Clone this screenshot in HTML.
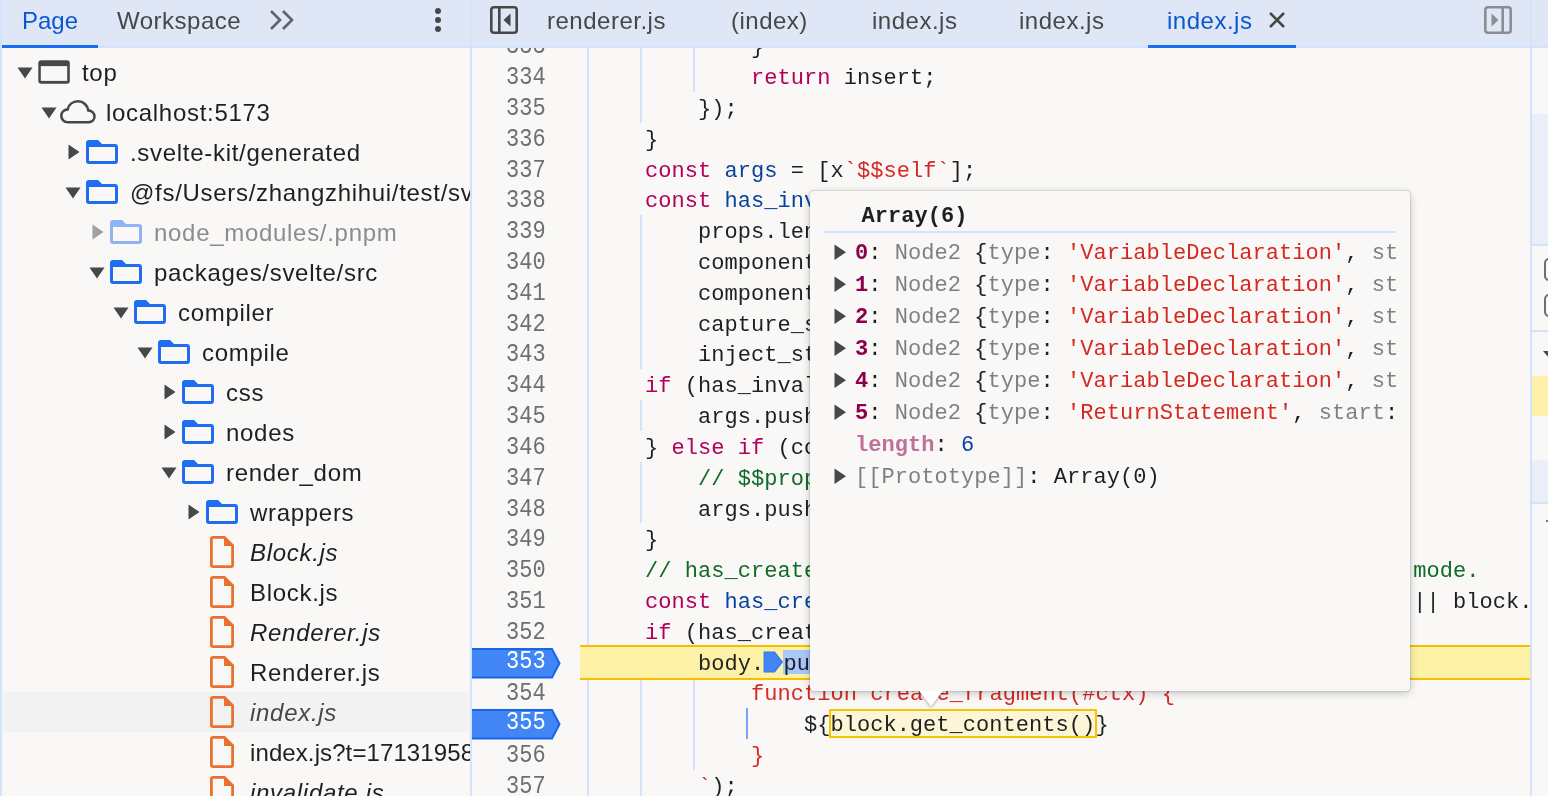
<!DOCTYPE html>
<html><head><meta charset="utf-8"><style>
*{margin:0;padding:0;box-sizing:border-box}
html,body{width:1548px;height:796px;overflow:hidden;background:#f9f8f6}
body{position:relative;font-family:"Liberation Sans",sans-serif;}
.a{position:absolute}
.sans{font-family:"Liberation Sans",sans-serif;font-size:24px;letter-spacing:0.5px;white-space:pre;line-height:40px;height:40px}
.mono{font-family:"Liberation Mono",monospace;font-size:22px;white-space:pre;letter-spacing:0.045px}
.kw{color:#b0005c}.df{color:#0842a0}.st{color:#d52a22}.cm{color:#0f6b27}.tx{color:#1f1f1f}
</style></head><body><div class="a" style="left:0;top:0;width:1548px;height:796px;will-change:transform;overflow:hidden">

<div class="a" style="left:0;top:0;width:2px;height:796px;background:#d3e3fd"></div>
<div class="a" style="left:2px;top:0;width:468px;height:46px;background:#dfe7f6"></div>
<div class="a" style="left:0;top:46px;width:1548px;height:2px;background:#d3e3fd"></div>
<div class="a sans" style="left:22px;top:-2.5px;color:#0b57d0;line-height:46px;height:46px;letter-spacing:0">Page</div>
<div class="a" style="left:2px;top:45px;width:96px;height:3px;background:#1a6ef5"></div>
<div class="a sans" style="left:117px;top:-2.5px;color:#474747;line-height:46px;height:46px">Workspace</div>
<svg class="a" style="left:268px;top:8px" width="28" height="24" viewBox="0 0 28 24"><path d="M3 3 L12 12 L3 21 M15 3 L24 12 L15 21" fill="none" stroke="#5f6368" stroke-width="2.6"/></svg>
<svg class="a" style="left:430px;top:4px" width="16" height="32"><circle cx="8" cy="7" r="3" fill="#474747"/><circle cx="8" cy="16" r="3" fill="#474747"/><circle cx="8" cy="25" r="3" fill="#474747"/></svg>
<div class="a" style="left:470px;top:0;width:2px;height:796px;background:#d3e3fd"></div>
<div class="a" style="left:2px;top:48px;width:468px;height:748px;overflow:hidden">
<svg class="a" style="left:15px;top:19px" width="16" height="12"><path d="M0.5 0.5 L15.5 0.5 L8 11.5 Z" fill="#474747"/></svg>
<svg class="a" style="left:35px;top:11px" width="34" height="26" viewBox="0 0 34 26"><rect x="1.3" y="1.2" width="31.5" height="23.5" rx="3" fill="#474747"/><rect x="3.8" y="7.1" width="26.4" height="14.8" fill="#f9f8f6"/></svg>
<div class="a sans" style="left:80px;top:5px;color:#1f1f1f;font-style:normal;letter-spacing:0.7px">top</div>
<svg class="a" style="left:39px;top:59px" width="16" height="12"><path d="M0.5 0.5 L15.5 0.5 L8 11.5 Z" fill="#474747"/></svg>
<svg class="a" style="left:57px;top:51px" width="38" height="26" viewBox="0 0 38 26"><path d="M9 23.2 C5 23.2 2.3 20.3 2.3 16.8 C2.3 13.3 5 10.6 8.6 10.4 C9.8 5.6 14 2.3 19 2.3 C24.5 2.3 28.6 6.3 29.3 11.4 C33 11.8 35.5 14.4 35.5 17.6 C35.5 20.7 33 23.2 29.5 23.2 Z" fill="none" stroke="#474747" stroke-width="2.6"/></svg>
<div class="a sans" style="left:104px;top:45px;color:#1f1f1f;font-style:normal;letter-spacing:0.7px">localhost:5173</div>
<svg class="a" style="left:65.5px;top:96px" width="12" height="16"><path d="M0.5 0.5 L11.5 8 L0.5 15.5 Z" fill="#474747"/></svg>
<svg class="a" style="left:83px;top:91px" width="34" height="26" viewBox="0 0 34 26"><path d="M1 4 Q1 1 4 1 L13 1 L17 5 L30 5 Q33 5 33 8 L33 22 Q33 25 30 25 L4 25 Q1 25 1 22 Z" fill="#1f6ef2"/><rect x="4" y="8" width="26" height="14" fill="#f9f8f6"/></svg>
<div class="a sans" style="left:128px;top:85px;color:#1f1f1f;font-style:normal;letter-spacing:0.7px">.svelte-kit/generated</div>
<svg class="a" style="left:63px;top:139px" width="16" height="12"><path d="M0.5 0.5 L15.5 0.5 L8 11.5 Z" fill="#474747"/></svg>
<svg class="a" style="left:83px;top:131px" width="34" height="26" viewBox="0 0 34 26"><path d="M1 4 Q1 1 4 1 L13 1 L17 5 L30 5 Q33 5 33 8 L33 22 Q33 25 30 25 L4 25 Q1 25 1 22 Z" fill="#1f6ef2"/><rect x="4" y="8" width="26" height="14" fill="#f9f8f6"/></svg>
<div class="a sans" style="left:128px;top:125px;color:#1f1f1f;font-style:normal;letter-spacing:0.7px">@fs/Users/zhangzhihui/test/svelte</div>
<svg class="a" style="left:89.5px;top:176px" width="12" height="16"><path d="M0.5 0.5 L11.5 8 L0.5 15.5 Z" fill="#a0a0a0"/></svg>
<svg class="a" style="left:107px;top:171px" width="34" height="26" viewBox="0 0 34 26"><path d="M1 4 Q1 1 4 1 L13 1 L17 5 L30 5 Q33 5 33 8 L33 22 Q33 25 30 25 L4 25 Q1 25 1 22 Z" fill="#8fb3f5"/><rect x="4" y="8" width="26" height="14" fill="#f9f8f6"/></svg>
<div class="a sans" style="left:152px;top:165px;color:#8c8c8c;font-style:normal;letter-spacing:0.7px">node_modules/.pnpm</div>
<svg class="a" style="left:87px;top:219px" width="16" height="12"><path d="M0.5 0.5 L15.5 0.5 L8 11.5 Z" fill="#474747"/></svg>
<svg class="a" style="left:107px;top:211px" width="34" height="26" viewBox="0 0 34 26"><path d="M1 4 Q1 1 4 1 L13 1 L17 5 L30 5 Q33 5 33 8 L33 22 Q33 25 30 25 L4 25 Q1 25 1 22 Z" fill="#1f6ef2"/><rect x="4" y="8" width="26" height="14" fill="#f9f8f6"/></svg>
<div class="a sans" style="left:152px;top:205px;color:#1f1f1f;font-style:normal;letter-spacing:0.7px">packages/svelte/src</div>
<svg class="a" style="left:111px;top:259px" width="16" height="12"><path d="M0.5 0.5 L15.5 0.5 L8 11.5 Z" fill="#474747"/></svg>
<svg class="a" style="left:131px;top:251px" width="34" height="26" viewBox="0 0 34 26"><path d="M1 4 Q1 1 4 1 L13 1 L17 5 L30 5 Q33 5 33 8 L33 22 Q33 25 30 25 L4 25 Q1 25 1 22 Z" fill="#1f6ef2"/><rect x="4" y="8" width="26" height="14" fill="#f9f8f6"/></svg>
<div class="a sans" style="left:176px;top:245px;color:#1f1f1f;font-style:normal;letter-spacing:0.7px">compiler</div>
<svg class="a" style="left:135px;top:299px" width="16" height="12"><path d="M0.5 0.5 L15.5 0.5 L8 11.5 Z" fill="#474747"/></svg>
<svg class="a" style="left:155px;top:291px" width="34" height="26" viewBox="0 0 34 26"><path d="M1 4 Q1 1 4 1 L13 1 L17 5 L30 5 Q33 5 33 8 L33 22 Q33 25 30 25 L4 25 Q1 25 1 22 Z" fill="#1f6ef2"/><rect x="4" y="8" width="26" height="14" fill="#f9f8f6"/></svg>
<div class="a sans" style="left:200px;top:285px;color:#1f1f1f;font-style:normal;letter-spacing:0.7px">compile</div>
<svg class="a" style="left:161.5px;top:336px" width="12" height="16"><path d="M0.5 0.5 L11.5 8 L0.5 15.5 Z" fill="#474747"/></svg>
<svg class="a" style="left:179px;top:331px" width="34" height="26" viewBox="0 0 34 26"><path d="M1 4 Q1 1 4 1 L13 1 L17 5 L30 5 Q33 5 33 8 L33 22 Q33 25 30 25 L4 25 Q1 25 1 22 Z" fill="#1f6ef2"/><rect x="4" y="8" width="26" height="14" fill="#f9f8f6"/></svg>
<div class="a sans" style="left:224px;top:325px;color:#1f1f1f;font-style:normal;letter-spacing:0.7px">css</div>
<svg class="a" style="left:161.5px;top:376px" width="12" height="16"><path d="M0.5 0.5 L11.5 8 L0.5 15.5 Z" fill="#474747"/></svg>
<svg class="a" style="left:179px;top:371px" width="34" height="26" viewBox="0 0 34 26"><path d="M1 4 Q1 1 4 1 L13 1 L17 5 L30 5 Q33 5 33 8 L33 22 Q33 25 30 25 L4 25 Q1 25 1 22 Z" fill="#1f6ef2"/><rect x="4" y="8" width="26" height="14" fill="#f9f8f6"/></svg>
<div class="a sans" style="left:224px;top:365px;color:#1f1f1f;font-style:normal;letter-spacing:0.7px">nodes</div>
<svg class="a" style="left:159px;top:419px" width="16" height="12"><path d="M0.5 0.5 L15.5 0.5 L8 11.5 Z" fill="#474747"/></svg>
<svg class="a" style="left:179px;top:411px" width="34" height="26" viewBox="0 0 34 26"><path d="M1 4 Q1 1 4 1 L13 1 L17 5 L30 5 Q33 5 33 8 L33 22 Q33 25 30 25 L4 25 Q1 25 1 22 Z" fill="#1f6ef2"/><rect x="4" y="8" width="26" height="14" fill="#f9f8f6"/></svg>
<div class="a sans" style="left:224px;top:405px;color:#1f1f1f;font-style:normal;letter-spacing:0.7px">render_dom</div>
<svg class="a" style="left:185.5px;top:456px" width="12" height="16"><path d="M0.5 0.5 L11.5 8 L0.5 15.5 Z" fill="#474747"/></svg>
<svg class="a" style="left:203px;top:451px" width="34" height="26" viewBox="0 0 34 26"><path d="M1 4 Q1 1 4 1 L13 1 L17 5 L30 5 Q33 5 33 8 L33 22 Q33 25 30 25 L4 25 Q1 25 1 22 Z" fill="#1f6ef2"/><rect x="4" y="8" width="26" height="14" fill="#f9f8f6"/></svg>
<div class="a sans" style="left:248px;top:445px;color:#1f1f1f;font-style:normal;letter-spacing:0.7px">wrappers</div>
<svg class="a" style="left:207px;top:487px" width="26" height="34" viewBox="0 0 26 34"><path d="M1 4 Q1 1 4 1 L16 1 L25 10 L25 30 Q25 33 22 33 L4 33 Q1 33 1 30 Z" fill="#e8712c"/><path d="M3.8 3.8 L15 3.8 L15 11 L22.2 11 L22.2 30.2 L3.8 30.2 Z" fill="#f9f8f6"/></svg>
<div class="a sans" style="left:248px;top:485px;color:#1f1f1f;font-style:italic;letter-spacing:0.7px">Block.js</div>
<svg class="a" style="left:207px;top:527px" width="26" height="34" viewBox="0 0 26 34"><path d="M1 4 Q1 1 4 1 L16 1 L25 10 L25 30 Q25 33 22 33 L4 33 Q1 33 1 30 Z" fill="#e8712c"/><path d="M3.8 3.8 L15 3.8 L15 11 L22.2 11 L22.2 30.2 L3.8 30.2 Z" fill="#f9f8f6"/></svg>
<div class="a sans" style="left:248px;top:525px;color:#1f1f1f;font-style:normal;letter-spacing:0.7px">Block.js</div>
<svg class="a" style="left:207px;top:567px" width="26" height="34" viewBox="0 0 26 34"><path d="M1 4 Q1 1 4 1 L16 1 L25 10 L25 30 Q25 33 22 33 L4 33 Q1 33 1 30 Z" fill="#e8712c"/><path d="M3.8 3.8 L15 3.8 L15 11 L22.2 11 L22.2 30.2 L3.8 30.2 Z" fill="#f9f8f6"/></svg>
<div class="a sans" style="left:248px;top:565px;color:#1f1f1f;font-style:italic;letter-spacing:0.7px">Renderer.js</div>
<svg class="a" style="left:207px;top:607px" width="26" height="34" viewBox="0 0 26 34"><path d="M1 4 Q1 1 4 1 L16 1 L25 10 L25 30 Q25 33 22 33 L4 33 Q1 33 1 30 Z" fill="#e8712c"/><path d="M3.8 3.8 L15 3.8 L15 11 L22.2 11 L22.2 30.2 L3.8 30.2 Z" fill="#f9f8f6"/></svg>
<div class="a sans" style="left:248px;top:605px;color:#1f1f1f;font-style:normal;letter-spacing:0.7px">Renderer.js</div>
<div class="a" style="left:0;top:644px;width:468px;height:40px;background:#f2f2f2"></div>
<svg class="a" style="left:207px;top:647px" width="26" height="34" viewBox="0 0 26 34"><path d="M1 4 Q1 1 4 1 L16 1 L25 10 L25 30 Q25 33 22 33 L4 33 Q1 33 1 30 Z" fill="#e8712c"/><path d="M3.8 3.8 L15 3.8 L15 11 L22.2 11 L22.2 30.2 L3.8 30.2 Z" fill="#f2f2f2"/></svg>
<div class="a sans" style="left:248px;top:645px;color:#474747;font-style:italic;letter-spacing:0.7px">index.js</div>
<svg class="a" style="left:207px;top:687px" width="26" height="34" viewBox="0 0 26 34"><path d="M1 4 Q1 1 4 1 L16 1 L25 10 L25 30 Q25 33 22 33 L4 33 Q1 33 1 30 Z" fill="#e8712c"/><path d="M3.8 3.8 L15 3.8 L15 11 L22.2 11 L22.2 30.2 L3.8 30.2 Z" fill="#f9f8f6"/></svg>
<div class="a sans" style="left:248px;top:685px;color:#1f1f1f;font-style:normal;letter-spacing:0.1px">index.js?t=1713195864</div>
<svg class="a" style="left:207px;top:727px" width="26" height="34" viewBox="0 0 26 34"><path d="M1 4 Q1 1 4 1 L16 1 L25 10 L25 30 Q25 33 22 33 L4 33 Q1 33 1 30 Z" fill="#e8712c"/><path d="M3.8 3.8 L15 3.8 L15 11 L22.2 11 L22.2 30.2 L3.8 30.2 Z" fill="#f9f8f6"/></svg>
<div class="a sans" style="left:248px;top:725px;color:#1f1f1f;font-style:italic;letter-spacing:0.7px">invalidate.js</div>
</div>
<div class="a" style="left:472px;top:0;width:1058px;height:46px;background:#dfe7f6"></div>
<svg class="a" style="left:489px;top:5px" width="30" height="30" viewBox="0 0 30 30"><rect x="2.3" y="2.3" width="25.4" height="25.4" rx="2.5" fill="none" stroke="#474747" stroke-width="2.6"/><rect x="9" y="2" width="2.6" height="26" fill="#474747"/><path d="M21.5 8.5 L14.5 15 L21.5 21.5 Z" fill="#474747"/></svg>
<div class="a sans" style="left:547px;top:-2.5px;color:#474747;line-height:46px;height:46px">renderer.js</div>
<div class="a sans" style="left:731px;top:-2.5px;color:#474747;line-height:46px;height:46px">(index)</div>
<div class="a sans" style="left:872px;top:-2.5px;color:#474747;line-height:46px;height:46px">index.js</div>
<div class="a sans" style="left:1019px;top:-2.5px;color:#474747;line-height:46px;height:46px">index.js</div>
<div class="a sans" style="left:1167px;top:-2.5px;color:#0b57d0;line-height:46px;height:46px">index.js</div>
<svg class="a" style="left:1268px;top:11px" width="18" height="18"><path d="M2 2 L16 16 M16 2 L2 16" stroke="#474747" stroke-width="2.6"/></svg>
<div class="a" style="left:1148px;top:45px;width:148px;height:3px;background:#1a6ef5"></div>
<svg class="a" style="left:1483px;top:5px" width="30" height="30" viewBox="0 0 30 30"><rect x="2.3" y="2.3" width="25.4" height="25.4" rx="2.5" fill="none" stroke="#8a8d91" stroke-width="2.6"/><rect x="18.4" y="2" width="2.6" height="26" fill="#8a8d91"/><path d="M8.5 8.5 L15.5 15 L8.5 21.5 Z" fill="#8a8d91"/></svg>
<div class="a" style="left:472px;top:48px;width:1058px;height:748px;overflow:hidden">
<div class="a" style="left:115px;top:0;width:2px;height:748px;background:#d3e3fd"></div>
<div class="a" style="left:168.0px;top:-17.8px;width:2px;height:92.5px;background:#d3e3fd"></div>
<div class="a" style="left:220.8px;top:-17.8px;width:2px;height:61.6px;background:#d3e3fd"></div>
<div class="a" style="left:168.0px;top:167.1px;width:2px;height:154.1px;background:#d3e3fd"></div>
<div class="a" style="left:168.0px;top:352.0px;width:2px;height:30.8px;background:#d3e3fd"></div>
<div class="a" style="left:168.0px;top:413.7px;width:2px;height:61.6px;background:#d3e3fd"></div>
<div class="a" style="left:168.0px;top:598.6px;width:2px;height:154.1px;background:#d3e3fd"></div>
<div class="a" style="left:220.8px;top:629.4px;width:2px;height:92.5px;background:#d3e3fd"></div>
<div class="a" style="left:273.6px;top:660.2px;width:2px;height:30.8px;background:#7aa5f2"></div>
<div class="a" style="left:108px;top:597.1px;width:950px;height:34.8px;background:#fdf1a7;border-top:2px solid #f5c000;border-bottom:2px solid #f5c000"></div>
<div class="a mono" style="left:34px;top:-17.8px;line-height:30.82px;color:#6f6f6f;padding-top:2px;transform:scaleY(1.13);transform-origin:0 14.8px">333</div>
<div class="a mono" style="left:120px;top:-17.8px;line-height:30.82px;padding-top:3px"><span class="tx">            }</span></div>
<div class="a mono" style="left:34px;top:13.0px;line-height:30.82px;color:#6f6f6f;padding-top:2px;transform:scaleY(1.13);transform-origin:0 14.8px">334</div>
<div class="a mono" style="left:120px;top:13.0px;line-height:30.82px;padding-top:3px"><span class="tx">            </span><span class="kw">return</span><span class="tx"> insert;</span></div>
<div class="a mono" style="left:34px;top:43.8px;line-height:30.82px;color:#6f6f6f;padding-top:2px;transform:scaleY(1.13);transform-origin:0 14.8px">335</div>
<div class="a mono" style="left:120px;top:43.8px;line-height:30.82px;padding-top:3px"><span class="tx">        });</span></div>
<div class="a mono" style="left:34px;top:74.6px;line-height:30.82px;color:#6f6f6f;padding-top:2px;transform:scaleY(1.13);transform-origin:0 14.8px">336</div>
<div class="a mono" style="left:120px;top:74.6px;line-height:30.82px;padding-top:3px"><span class="tx">    }</span></div>
<div class="a mono" style="left:34px;top:105.5px;line-height:30.82px;color:#6f6f6f;padding-top:2px;transform:scaleY(1.13);transform-origin:0 14.8px">337</div>
<div class="a mono" style="left:120px;top:105.5px;line-height:30.82px;padding-top:3px"><span class="tx">    </span><span class="kw">const</span><span class="tx"> </span><span class="df">args</span><span class="tx"> = [x</span><span class="st">`$$self`</span><span class="tx">];</span></div>
<div class="a mono" style="left:34px;top:136.3px;line-height:30.82px;color:#6f6f6f;padding-top:2px;transform:scaleY(1.13);transform-origin:0 14.8px">338</div>
<div class="a mono" style="left:120px;top:136.3px;line-height:30.82px;padding-top:3px"><span class="tx">    </span><span class="kw">const</span><span class="tx"> </span><span class="df">has_inv</span></div>
<div class="a mono" style="left:34px;top:167.1px;line-height:30.82px;color:#6f6f6f;padding-top:2px;transform:scaleY(1.13);transform-origin:0 14.8px">339</div>
<div class="a mono" style="left:120px;top:167.1px;line-height:30.82px;padding-top:3px"><span class="tx">        props.length</span></div>
<div class="a mono" style="left:34px;top:197.9px;line-height:30.82px;color:#6f6f6f;padding-top:2px;transform:scaleY(1.13);transform-origin:0 14.8px">340</div>
<div class="a mono" style="left:120px;top:197.9px;line-height:30.82px;padding-top:3px"><span class="tx">        component.</span></div>
<div class="a mono" style="left:34px;top:228.7px;line-height:30.82px;color:#6f6f6f;padding-top:2px;transform:scaleY(1.13);transform-origin:0 14.8px">341</div>
<div class="a mono" style="left:120px;top:228.7px;line-height:30.82px;padding-top:3px"><span class="tx">        component.</span></div>
<div class="a mono" style="left:34px;top:259.6px;line-height:30.82px;color:#6f6f6f;padding-top:2px;transform:scaleY(1.13);transform-origin:0 14.8px">342</div>
<div class="a mono" style="left:120px;top:259.6px;line-height:30.82px;padding-top:3px"><span class="tx">        capture_st</span></div>
<div class="a mono" style="left:34px;top:290.4px;line-height:30.82px;color:#6f6f6f;padding-top:2px;transform:scaleY(1.13);transform-origin:0 14.8px">343</div>
<div class="a mono" style="left:120px;top:290.4px;line-height:30.82px;padding-top:3px"><span class="tx">        inject_sta</span></div>
<div class="a mono" style="left:34px;top:321.2px;line-height:30.82px;color:#6f6f6f;padding-top:2px;transform:scaleY(1.13);transform-origin:0 14.8px">344</div>
<div class="a mono" style="left:120px;top:321.2px;line-height:30.82px;padding-top:3px"><span class="tx">    </span><span class="kw">if</span><span class="tx"> (has_invalid</span></div>
<div class="a mono" style="left:34px;top:352.0px;line-height:30.82px;color:#6f6f6f;padding-top:2px;transform:scaleY(1.13);transform-origin:0 14.8px">345</div>
<div class="a mono" style="left:120px;top:352.0px;line-height:30.82px;padding-top:3px"><span class="tx">        args.push(</span></div>
<div class="a mono" style="left:34px;top:382.8px;line-height:30.82px;color:#6f6f6f;padding-top:2px;transform:scaleY(1.13);transform-origin:0 14.8px">346</div>
<div class="a mono" style="left:120px;top:382.8px;line-height:30.82px;padding-top:3px"><span class="tx">    } </span><span class="kw">else if</span><span class="tx"> (comp</span></div>
<div class="a mono" style="left:34px;top:413.7px;line-height:30.82px;color:#6f6f6f;padding-top:2px;transform:scaleY(1.13);transform-origin:0 14.8px">347</div>
<div class="a mono" style="left:120px;top:413.7px;line-height:30.82px;padding-top:3px"><span class="tx">        </span><span class="cm">// $$props</span></div>
<div class="a mono" style="left:34px;top:444.5px;line-height:30.82px;color:#6f6f6f;padding-top:2px;transform:scaleY(1.13);transform-origin:0 14.8px">348</div>
<div class="a mono" style="left:120px;top:444.5px;line-height:30.82px;padding-top:3px"><span class="tx">        args.push(</span></div>
<div class="a mono" style="left:34px;top:475.3px;line-height:30.82px;color:#6f6f6f;padding-top:2px;transform:scaleY(1.13);transform-origin:0 14.8px">349</div>
<div class="a mono" style="left:120px;top:475.3px;line-height:30.82px;padding-top:3px"><span class="tx">    }</span></div>
<div class="a mono" style="left:34px;top:506.1px;line-height:30.82px;color:#6f6f6f;padding-top:2px;transform:scaleY(1.13);transform-origin:0 14.8px">350</div>
<div class="a mono" style="left:120px;top:506.1px;line-height:30.82px;padding-top:3px"><span class="cm">    // has_create_fragment </span></div>
<div class="a mono" style="left:34px;top:536.9px;line-height:30.82px;color:#6f6f6f;padding-top:2px;transform:scaleY(1.13);transform-origin:0 14.8px">351</div>
<div class="a mono" style="left:120px;top:536.9px;line-height:30.82px;padding-top:3px"><span class="tx">    </span><span class="kw">const</span><span class="tx"> </span><span class="df">has_create</span></div>
<div class="a mono" style="left:34px;top:567.8px;line-height:30.82px;color:#6f6f6f;padding-top:2px;transform:scaleY(1.13);transform-origin:0 14.8px">352</div>
<div class="a mono" style="left:120px;top:567.8px;line-height:30.82px;padding-top:3px"><span class="tx">    </span><span class="kw">if</span><span class="tx"> (has_create</span></div>
<svg class="a" style="left:0px;top:599.6px" width="90" height="31" viewBox="0 0 90 31"><path d="M-2 1 L80 1 L87.5 15.2 L80 29.4 L-2 29.4 Z" fill="#4285f4" stroke="#1567e8" stroke-width="2"/></svg>
<div class="a mono" style="left:34px;top:596.6px;line-height:30.82px;color:#ffffff;padding-top:2px;transform:scaleY(1.13);transform-origin:0 14.8px">353</div>
<div class="a mono" style="left:120px;top:598.6px;line-height:30.82px;padding-top:3px"><span class="tx">        body.</span></div>
<div class="a mono" style="left:34px;top:629.4px;line-height:30.82px;color:#6f6f6f;padding-top:2px;transform:scaleY(1.13);transform-origin:0 14.8px">354</div>
<div class="a mono" style="left:120px;top:629.4px;line-height:30.82px;padding-top:3px"><span class="tx">            </span><span class="st">function create_fragment(#ctx) {</span></div>
<svg class="a" style="left:0px;top:661.2px" width="90" height="31" viewBox="0 0 90 31"><path d="M-2 1 L80 1 L87.5 15.2 L80 29.4 L-2 29.4 Z" fill="#4285f4" stroke="#1567e8" stroke-width="2"/></svg>
<div class="a mono" style="left:34px;top:658.2px;line-height:30.82px;color:#ffffff;padding-top:2px;transform:scaleY(1.13);transform-origin:0 14.8px">355</div>
<div class="a mono" style="left:120px;top:660.2px;line-height:30.82px;padding-top:3px"><span class="tx">                ${block.get_contents()}</span></div>
<div class="a mono" style="left:34px;top:691.0px;line-height:30.82px;color:#6f6f6f;padding-top:2px;transform:scaleY(1.13);transform-origin:0 14.8px">356</div>
<div class="a mono" style="left:120px;top:691.0px;line-height:30.82px;padding-top:3px"><span class="tx">            </span><span class="st">}</span></div>
<div class="a mono" style="left:34px;top:721.9px;line-height:30.82px;color:#6f6f6f;padding-top:2px;transform:scaleY(1.13);transform-origin:0 14.8px">357</div>
<div class="a mono" style="left:120px;top:721.9px;line-height:30.82px;padding-top:3px"><span class="tx">        </span><span class="st">`</span><span class="tx">);</span></div>
<div class="a mono cm" style="left:941.2px;top:506.1px;line-height:30.82px;padding-top:3px">mode.</div>
<div class="a mono tx" style="left:941.2px;top:536.9px;line-height:30.82px;padding-top:3px">|| block.</div>
<div class="a" style="left:311.0px;top:602.0px;width:120px;height:24px;background:#a8c7fa"></div>
<div class="a mono tx" style="left:311.5px;top:598.6px;line-height:30.82px;padding-top:3px">push(</div>
<svg class="a" style="left:291.3px;top:603.2px" width="22" height="23" viewBox="0 0 22 23"><path d="M1.2 1.2 L11.5 1.2 L19.3 11 L11.5 20.8 L1.2 20.8 Z" fill="#4285f4" stroke="#2a74f0" stroke-width="1.2"/></svg>
<div class="a" style="left:356.5px;top:661.0px;width:268.5px;height:29px;background:#fcf6d6;border:2px solid #f9c300"></div>
<div class="a mono tx" style="left:358.4px;top:660.2px;line-height:30.82px;padding-top:3px">block.get_contents()</div>
</div>
<div class="a" style="left:810px;top:190.5px;width:600px;height:500.5px;background:#f9f8f6;border-radius:4px;box-shadow:0 0 2px rgba(0,0,0,0.3),0 2px 9px rgba(0,0,0,0.22)"></div>
<svg class="a" style="left:912px;top:686px" width="38" height="26"><path d="M6.5 4 L19 20.5 L31.5 4 Z" fill="#ffffff" style="filter:drop-shadow(0 1px 1.5px rgba(0,0,0,0.35))"/><rect x="0" y="0" width="38" height="5" fill="#f9f8f6"/></svg>
<div class="a" style="left:810px;top:190.5px;width:600px;height:500px;overflow:hidden">
<div class="a mono" style="left:51.5px;top:10.0px;font-weight:bold;color:#1f1f1f;line-height:32px">Array(6)</div>
<div class="a" style="left:14px;top:40.8px;width:572px;height:2px;background:#d3e3fd"></div>
<div class="a" style="left:14px;top:0;width:573px;height:500px;overflow:hidden">
<svg class="a" style="left:9.5px;top:53.5px" width="13" height="17"><path d="M0.5 0.5 L12 8.2 L0.5 16 Z" fill="#474747"/></svg>
<div class="a mono" style="left:31.0px;top:47.5px;line-height:32px"><span style="color:#8b004b;font-weight:bold">0</span><span style="color:#1f1f1f">: </span><span style="color:#808080">Node2 </span><span style="color:#1f1f1f">{</span><span style="color:#808080">type</span><span style="color:#1f1f1f">: </span><span style="color:#d52a22">&#x27;VariableDeclaration&#x27;</span><span style="color:#1f1f1f">, </span><span style="color:#808080">start: 0</span></div>
<svg class="a" style="left:9.5px;top:85.5px" width="13" height="17"><path d="M0.5 0.5 L12 8.2 L0.5 16 Z" fill="#474747"/></svg>
<div class="a mono" style="left:31.0px;top:79.5px;line-height:32px"><span style="color:#8b004b;font-weight:bold">1</span><span style="color:#1f1f1f">: </span><span style="color:#808080">Node2 </span><span style="color:#1f1f1f">{</span><span style="color:#808080">type</span><span style="color:#1f1f1f">: </span><span style="color:#d52a22">&#x27;VariableDeclaration&#x27;</span><span style="color:#1f1f1f">, </span><span style="color:#808080">start: 0</span></div>
<svg class="a" style="left:9.5px;top:117.5px" width="13" height="17"><path d="M0.5 0.5 L12 8.2 L0.5 16 Z" fill="#474747"/></svg>
<div class="a mono" style="left:31.0px;top:111.5px;line-height:32px"><span style="color:#8b004b;font-weight:bold">2</span><span style="color:#1f1f1f">: </span><span style="color:#808080">Node2 </span><span style="color:#1f1f1f">{</span><span style="color:#808080">type</span><span style="color:#1f1f1f">: </span><span style="color:#d52a22">&#x27;VariableDeclaration&#x27;</span><span style="color:#1f1f1f">, </span><span style="color:#808080">start: 0</span></div>
<svg class="a" style="left:9.5px;top:149.5px" width="13" height="17"><path d="M0.5 0.5 L12 8.2 L0.5 16 Z" fill="#474747"/></svg>
<div class="a mono" style="left:31.0px;top:143.5px;line-height:32px"><span style="color:#8b004b;font-weight:bold">3</span><span style="color:#1f1f1f">: </span><span style="color:#808080">Node2 </span><span style="color:#1f1f1f">{</span><span style="color:#808080">type</span><span style="color:#1f1f1f">: </span><span style="color:#d52a22">&#x27;VariableDeclaration&#x27;</span><span style="color:#1f1f1f">, </span><span style="color:#808080">start: 0</span></div>
<svg class="a" style="left:9.5px;top:181.5px" width="13" height="17"><path d="M0.5 0.5 L12 8.2 L0.5 16 Z" fill="#474747"/></svg>
<div class="a mono" style="left:31.0px;top:175.5px;line-height:32px"><span style="color:#8b004b;font-weight:bold">4</span><span style="color:#1f1f1f">: </span><span style="color:#808080">Node2 </span><span style="color:#1f1f1f">{</span><span style="color:#808080">type</span><span style="color:#1f1f1f">: </span><span style="color:#d52a22">&#x27;VariableDeclaration&#x27;</span><span style="color:#1f1f1f">, </span><span style="color:#808080">start: 0</span></div>
<svg class="a" style="left:9.5px;top:213.5px" width="13" height="17"><path d="M0.5 0.5 L12 8.2 L0.5 16 Z" fill="#474747"/></svg>
<div class="a mono" style="left:31.0px;top:207.5px;line-height:32px"><span style="color:#8b004b;font-weight:bold">5</span><span style="color:#1f1f1f">: </span><span style="color:#808080">Node2 </span><span style="color:#1f1f1f">{</span><span style="color:#808080">type</span><span style="color:#1f1f1f">: </span><span style="color:#d52a22">&#x27;ReturnStatement&#x27;</span><span style="color:#1f1f1f">, </span><span style="color:#808080">start</span><span style="color:#1f1f1f">:</span><span style="color:#808080"> 0</span></div>
<div class="a mono" style="left:31.0px;top:239.5px;line-height:32px"><span style="color:#c0719a;font-weight:bold">length</span><span style="color:#1f1f1f">: </span><span style="color:#0842a0">6</span></div>
<svg class="a" style="left:9.5px;top:277.5px" width="13" height="17"><path d="M0.5 0.5 L12 8.2 L0.5 16 Z" fill="#474747"/></svg>
<div class="a mono" style="left:31.0px;top:271.5px;line-height:32px"><span style="color:#808080">[[Prototype]]</span><span style="color:#1f1f1f">: Array(0)</span></div>
</div></div>
<div class="a" style="left:1530px;top:0;width:2px;height:796px;background:#d3e3fd"></div>
<div class="a" style="left:1532px;top:0;width:16px;height:46px;background:#dfe7f6"></div>
<div class="a" style="left:1532px;top:114px;width:16px;height:130px;background:#e9eef8"></div>
<div class="a" style="left:1532px;top:244px;width:16px;height:2px;background:#d3e3fd"></div>
<div class="a" style="left:1544px;top:258px;width:20px;height:23px;border:2.5px solid #6f6f6f;border-radius:5px"></div>
<div class="a" style="left:1544px;top:294px;width:20px;height:23px;border:2.5px solid #6f6f6f;border-radius:5px"></div>
<div class="a" style="left:1532px;top:330px;width:16px;height:2px;background:#d3e3fd"></div>
<svg class="a" style="left:1543px;top:350px" width="10" height="10"><path d="M0 1 L14 1 L7 9 Z" fill="#474747"/></svg>
<div class="a" style="left:1532px;top:376px;width:16px;height:40px;background:#fef0a8"></div>
<div class="a" style="left:1532px;top:460px;width:16px;height:42px;background:#e9eef8"></div>
<div class="a" style="left:1532px;top:502px;width:16px;height:2px;background:#d3e3fd"></div>
<div class="a" style="left:1546px;top:520px;width:2px;height:2px;background:#777"></div>
</div></body></html>
